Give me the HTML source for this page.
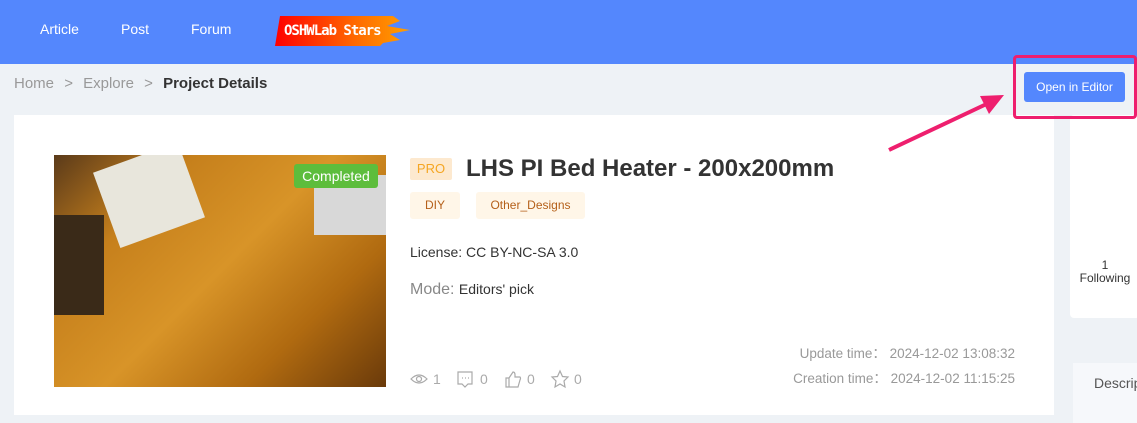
<!DOCTYPE html>
<html><head><meta charset="utf-8"><style>
*{margin:0;padding:0;box-sizing:border-box}
body{width:1137px;height:413px;overflow:hidden;background:#eef2f6;font-family:"Liberation Sans",sans-serif;position:relative}
.hdr{position:absolute;left:0;top:0;width:1137px;height:64px;background:#5487fd}
.nav{position:absolute;top:21px;color:#fff;font-size:14px}
.abs{position:absolute}
</style></head><body>
<div class="hdr"></div>
<div class="nav" style="left:40px">Article</div>
<div class="nav" style="left:121px">Post</div>
<div class="nav" style="left:191px">Forum</div>
<div class="abs" style="left:275px;top:16px;width:140px;height:30px">
<svg width="140" height="30"><defs><linearGradient id="g" x1="0" x2="1"><stop offset="0" stop-color="#ff0000"/><stop offset="0.6" stop-color="#ff6a00"/><stop offset="1" stop-color="#ffa000"/></linearGradient></defs>
<path d="M5 0H118L125 5L112 10L135 14L115 18L125 24L108 27L105 30H0Z" fill="url(#g)"/></svg>
<div class="abs" style="left:9px;top:7px;color:#fff;font-weight:bold;font-size:14px;font-family:'DejaVu Sans Mono',monospace;letter-spacing:-1px">OSHWLab Stars</div></div>
<div class="abs" style="left:14px;top:75px;font-size:15px;color:#999">Home <span style="margin:0 6px">&gt;</span> Explore <span style="margin:0 6px">&gt;</span> <b style="color:#333">Project Details</b></div>
<div class="abs" style="left:14px;top:115px;width:1040px;height:300px;background:#fff"></div>
<div class="abs" style="left:1070px;top:115px;width:70px;height:203px;background:#fff;border-radius:4px"></div>
<div class="abs" style="left:1013px;top:55px;width:124px;height:64px;border:3px solid #ee1f6e;border-radius:4px"></div>
<div class="abs" style="left:1024px;top:72px;width:101px;height:30px;background:#5487fd;border-radius:3px;color:#fff;font-size:12px;line-height:30px;text-align:center">Open in Editor</div>
<svg class="abs" style="left:885px;top:90px" width="125" height="65"><line x1="4" y1="60" x2="110" y2="10" stroke="#ee1f6e" stroke-width="4"/><path d="M119 5L95 6L104 24Z" fill="#ee1f6e"/></svg>
<div class="abs" style="left:1070px;top:259px;width:70px;text-align:center;font-size:12px;color:#333;line-height:13px">1<br>Following</div>
<div class="abs" style="left:1073px;top:363px;width:70px;height:60px;background:#f6f8fb"></div>
<div class="abs" style="left:1094px;top:375px;font-size:14px;color:#555">Descrip</div>
<div class="abs" style="left:54px;top:155px;width:332px;height:232px;background:linear-gradient(135deg,#5a3a1a 0%,#c6801c 25%,#d89428 50%,#b06a10 75%,#6a3a0a 100%);overflow:hidden">
<div class="abs" style="left:50px;top:0;width:90px;height:80px;background:#e8e6dc;transform:rotate(-20deg)"></div>
<div class="abs" style="left:260px;top:20px;width:80px;height:60px;background:#d8d8d8"></div>
<div class="abs" style="left:0;top:60px;width:50px;height:100px;background:#3a2a18"></div>
</div>
<div class="abs" style="left:294px;top:164px;width:84px;height:24px;background:#5dbd3c;border-radius:3px;color:#fff;font-size:14px;line-height:24px;text-align:center">Completed</div>
<div class="abs" style="left:410px;top:158px;width:42px;height:22px;background:#fde9cf;border-radius:2px;color:#f5a623;font-size:13px;line-height:22px;text-align:center">PRO</div>
<div class="abs" style="left:466px;top:155px;font-size:24px;font-weight:bold;color:#333">LHS PI Bed Heater - 200x200mm</div>
<div class="abs" style="left:410px;top:192px;width:50px;height:27px;background:#fff6e8;border-radius:3px;color:#b5601a;font-size:12px;line-height:27px;text-align:center">DIY</div>
<div class="abs" style="left:476px;top:192px;width:109px;height:27px;background:#fff6e8;border-radius:3px;color:#b5601a;font-size:12px;line-height:27px;text-align:center">Other_Designs</div>
<div class="abs" style="left:410px;top:244px;font-size:14px;color:#333">License: CC BY-NC-SA 3.0</div>
<div class="abs" style="left:410px;top:281px;font-size:16px;color:#888">Mode: <span style="font-size:14px;color:#333">Editors' pick</span></div>
<svg class="abs" style="left:410px;top:369px" width="180" height="20" fill="none" stroke="#aaa" stroke-width="1.2">
<path d="M1 10Q9 2 17 10Q9 18 1 10Z"/><circle cx="9" cy="10" r="2.5"/>
<path d="M48 3H62V15H58L55 18L52 15H48Z"/><path d="M52 9h1M55 9h1M58 9h1"/>
<path d="M96 9H99V18H96ZM99 9L103 3Q105 3 105 6V8H110Q111 9 110 11L108 18H99"/>
<path d="M150 2L152.5 7.5L158 8L154 12L155 18L150 15L145 18L146 12L142 8L147.5 7.5Z"/>
</svg>
<div class="abs" style="left:433px;top:371px;font-size:14px;color:#aaa">1</div>
<div class="abs" style="left:480px;top:371px;font-size:14px;color:#aaa">0</div>
<div class="abs" style="left:527px;top:371px;font-size:14px;color:#aaa">0</div>
<div class="abs" style="left:574px;top:371px;font-size:14px;color:#aaa">0</div>
<div class="abs" style="left:700px;top:341px;width:315px;text-align:right;font-size:13.5px;color:#999;line-height:25px">Update time：&nbsp;2024-12-02 13:08:32<br>Creation time：&nbsp;2024-12-02 11:15:25</div>
</body></html>
